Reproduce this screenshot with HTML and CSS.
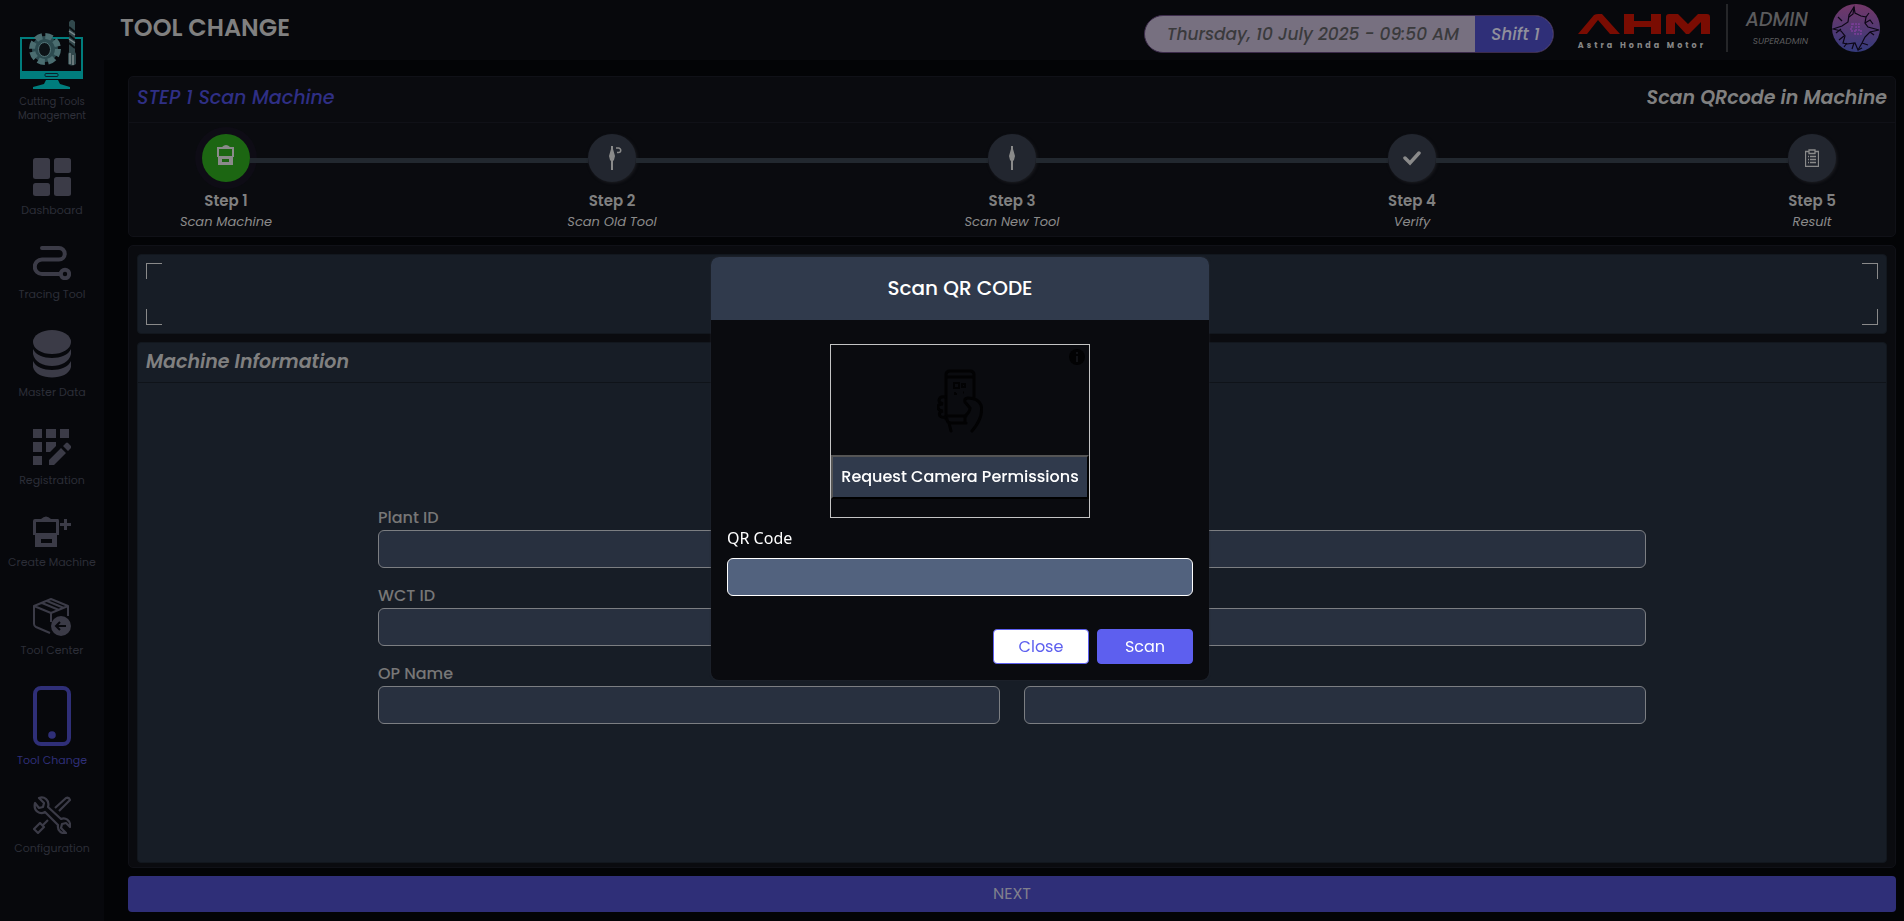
FILE: index.html
```html
<!DOCTYPE html>
<html lang="en">
<head>
<meta charset="utf-8">
<title>Tool Change</title>
<link rel="stylesheet" href="styles.css">
</head>
<body>
<div class="app">
  <aside class="sidebar">
    <div class="brand">
      <svg width="66" height="71" viewBox="0 0 66 71">
        <path d="M2 18h61v40H2z" fill="#07080c" stroke="#007d7d" stroke-width="2"/>
        <path d="M2 51h61v7H2zM27 60h12l2 4 10 3v2H14v-2l11-3z" fill="#007d7d"/>
        <rect x="26" y="53.500" width="13" height="3" rx="1" fill="none" stroke="#07202a"/>
        <circle cx="26" cy="29" r="13" fill="#2c4a4f"/>
        <circle cx="26" cy="29" r="13" fill="none" stroke="#4b6d70" stroke-width="6" stroke-dasharray="7 3.200"/>
        <ellipse cx="25.500" cy="29.500" rx="6" ry="7" fill="#0c1216" stroke="#55777a"/>
        <path d="M50 2l2-2h2l2 2v30l1 2v10q-4 3-8 0V34l1-2z" fill="#31484c"/>
        <path d="M50 7l6 5M50 15l6 5M50 23l6 5" stroke="#0a1013" stroke-width="2"/>
        <path d="M50 11l6 4M50 19l6 4M51 33v11M54 35v10" stroke="#7d8a8c" stroke-width="1.500" fill="none"/>
      </svg>
      <span>Cutting Tools<br>Management</span>
    </div>
    <nav class="nav">
      <a class="nav-item" href="#">
        <svg width="38" height="38" viewBox="0 0 38 38" fill="currentColor"><rect width="17" height="21" rx="2.500"/><rect x="21" width="17" height="15" rx="2.500"/><rect y="25" width="17" height="13" rx="2.500"/><rect x="21" y="19" width="17" height="19" rx="2.500"/></svg>
        <span>Dashboard</span>
      </a>
      <a class="nav-item" href="#">
        <svg width="38" height="34" viewBox="0 0 38 34" fill="none" stroke="currentColor" stroke-width="4" stroke-linecap="round"><path d="M9 2h17a5.700 5.700 0 0 1 0 11.500H9a7 7 0 0 0 0 14.500h17"/><circle cx="32" cy="28" r="4.200"/></svg>
        <span>Tracing Tool</span>
      </a>
      <a class="nav-item" href="#">
        <svg width="38" height="48" viewBox="0 0 38 48" fill="currentColor"><ellipse cx="19" cy="12" rx="19" ry="12"/><path d="M0 19c5 12 33 12 38 0v5c-3 16-35 16-38 0zM0 31c5 12 33 12 38 0v6c-3 14-35 14-38 0z"/></svg>
        <span>Master Data</span>
      </a>
      <a class="nav-item" href="#">
        <svg width="38" height="38" viewBox="0 0 38 38" fill="currentColor"><path d="M0 1h9v9H0zM13 1h10v9H13zM27 1h9v9h-9zM0 14h9v10H0zM13 14h10v4l-6 6h-4zM0 28h9v9H0zM16 32l12-12 5 5-12 12h-5zM30 18l3-3q1-1 2 0l3 3q.5 1 0 2l-3 3z"/></svg>
        <span>Registration</span>
      </a>
      <a class="nav-item" href="#">
        <svg width="38" height="32" viewBox="0 0 38 32"><path d="M8 3q5-5 10 0h7q1 0 1 2v14h-2v12H2V19H0V5q0-2 2-2zM3 6v11h20V6zM8 23v4h11v-4z" fill="currentColor" fill-rule="evenodd"/><path d="M32.500 3v11M27 8.500h11" stroke="currentColor" stroke-width="3"/></svg>
        <span>Create Machine</span>
      </a>
      <a class="nav-item" href="#">
        <svg width="38" height="38" viewBox="0 0 38 38" fill="none" stroke="currentColor" stroke-width="2"><path d="M17 35L3 29Q1 28 1 26V8l17-7 17 7v10M1 8l17 7 17-7M18 15v9M9 5l17 7M14 3l17 7" stroke-linejoin="round"/><circle cx="28" cy="28" r="10" fill="currentColor" stroke="none"/><path d="M33 28H23m4-4l-4 4 4 4" stroke="#07080c"/></svg>
        <span>Tool Center</span>
      </a>
      <a class="nav-item nav-item-active" href="#">
        <svg width="38" height="60" viewBox="0 0 38 60"><rect x="2" y="2" width="34" height="56" rx="6" fill="none" stroke="currentColor" stroke-width="4"/><circle cx="19" cy="49" r="3.800" fill="currentColor"/></svg>
        <span>Tool Change</span>
      </a>
      <a class="nav-item" href="#">
        <svg width="38" height="38" viewBox="0 0 38 38" fill="none" stroke="currentColor" stroke-width="2.200" stroke-linejoin="round"><path d="M6 2l5 5-1 4-4 1-4-5c-2 8 5 12 10 9l13 13c-1 6 4 9 8 8l-5-5 1-4 4-1 4 4c1-7-5-10-9-8L15 11C17 4 11 0 6 2z"/><path d="M22 12L33 2q3-1 4 2L26 15M15 24l-6 6M1 33l6-6 4 4-6 6z"/></svg>
        <span>Configuration</span>
      </a>
    </nav>
  </aside>
  <div class="page">
    <header class="topbar">
      <h1 class="page-title">TOOL CHANGE</h1>
      <div class="topbar-right">
        <div class="clock"><span class="clock-time">Thursday, 10 July 2025 - 09:50 AM</span><span class="clock-shift">Shift 1</span></div>
        <div class="logo">
          <svg width="132" height="20" viewBox="0 0 132 20" fill="#7a0c02"><path d="M0 20L16 1q2-1 4-1h4l18 20H32L20 6 9 20zM46 0h10v7h17V0h10v20H73v-7H56v7H46zM88 20V3q0-3 3-3h9l10 10L120 0h9q3 0 3 3v17h-9V8l-12 12h-3L97 8v12z"/></svg>
          <span>Astra Honda Motor</span>
        </div>
        <div class="user"><strong>ADMIN</strong><small>SUPERADMIN</small></div>
        <svg class="avatar" width="48" height="48" viewBox="0 0 48 48">
          <defs><linearGradient id="sky" x1="0" y1="0" x2="0" y2="1"><stop offset="0" stop-color="#733768"/><stop offset="1" stop-color="#343a7c"/></linearGradient></defs>
          <circle cx="24" cy="24" r="24" fill="url(#sky)"/>
          <g fill="none" stroke="#0c0716" stroke-width="1.200"><path d="M22 3l1 6 6 3 5 1-1 6 3 4 11 3-9 2-5 5-3 6-4 7-3-7-8 1-4-1 2-7-4-5-8-2 9-3 6-4 1-7z"/><path d="M22 3l-1 7-4 3M34 13l3-4M33 19l5-3 3 4M38 28l4 3M12 32l-5 4M15 39l-3 4M30 39l6 2M22 39l-2 6M9 25l-5 4M10 17l-4-4M26 46l4-2"/></g>
          <path d="M20 20h7v3h-3v3h5v4h-6v-3h-4v-4h1z" fill="none" stroke="#7d3e9a" stroke-width="1.500" stroke-dasharray="2 1"/>
        </svg>
      </div>
    </header>
    <main class="content">
      <section class="card">
        <div class="card-head"><h2 class="step-title">STEP 1 Scan Machine</h2><h2>Scan QRcode in Machine</h2></div>
        <ol class="stepper">
          <li class="step step-active"><span class="dot"><svg width="18" height="20" viewBox="0 0 18 20"><path d="M5 2q4-4 8 0h4v10h-1v8H1v-8H0V2zM2 4v7h13V4zM5 14v3h7v-3z" fill="currentColor" fill-rule="evenodd"/></svg></span><b>Step 1</b><i>Scan Machine</i></li>
          <li class="line line-first"></li>
          <li class="step"><span class="dot"><svg width="20" height="24" viewBox="0 0 20 24"><path d="M9 0h2v3l2 7-1 4-1 1v9H9v-9l-1-1-1-4 2-7z" fill="currentColor"/><path d="M14 2h2.500a2.200 2.200 0 0 1 0 4.500H15" fill="none" stroke="currentColor" stroke-width="1.500"/></svg></span><b>Step 2</b><i>Scan Old Tool</i></li>
          <li class="line"></li>
          <li class="step"><span class="dot"><svg width="8" height="24" viewBox="0 0 8 24"><path d="M3 0h2v3l2 7-1 4-1 1v9H3v-9l-1-1-1-4 2-7z" fill="currentColor"/></svg></span><b>Step 3</b><i>Scan New Tool</i></li>
          <li class="line"></li>
          <li class="step"><span class="dot"><svg width="18" height="16" viewBox="0 0 18 16"><path d="M2 8l5 5L16 3" fill="none" stroke="currentColor" stroke-width="3.500" stroke-linecap="round"/></svg></span><b>Step 4</b><i>Verify</i></li>
          <li class="line"></li>
          <li class="step"><span class="dot"><svg width="14" height="18" viewBox="0 0 14 18" fill="none" stroke="currentColor"><path d="M4 2.500H.5v15h13v-15H10M4 1h6v3.500H4zM3 7.500h1m1 0h6M3 10.500h1m1 0h6M3 13.500h1m1 0h6" stroke-width="1.300"/></svg></span><b>Step 5</b><i>Result</i></li>
        </ol>
      </section>
      <section class="card work">
        <div class="scan-strip"><span class="bracket bracket-a"></span><span class="bracket bracket-b"></span><span class="bracket bracket-c"></span><span class="bracket bracket-d"></span></div>
        <div class="panel">
          <h2 class="panel-title">Machine Information</h2>
          <form class="panel-body">
            <div class="fields">
              <div class="field"><label for="plant">Plant ID</label><input id="plant" type="text" readonly></div>
              <div class="field"><input aria-label="Plant" type="text" readonly></div>
              <div class="field"><label for="wct">WCT ID</label><input id="wct" type="text" readonly></div>
              <div class="field"><input aria-label="WCT" type="text" readonly></div>
              <div class="field"><label for="op">OP Name</label><input id="op" type="text" readonly></div>
              <div class="field"><input aria-label="OP" type="text" readonly></div>
            </div>
          </form>
        </div>
      </section>
      <button class="next" type="button">NEXT</button>
    </main>
  </div>
</div>
<div class="overlay">
  <div class="modal" role="dialog" aria-labelledby="modal-title">
    <h2 class="modal-title" id="modal-title">Scan QR CODE</h2>
    <div class="modal-body">
      <div class="camera">
        <svg class="info" width="16" height="16" viewBox="0 0 16 16"><circle cx="8" cy="8" r="8" fill="#020203"/><path d="M8 3v2M8 7v6" stroke="#111216" stroke-width="2"/></svg>
        <svg class="phone" width="46" height="64" viewBox="0 0 46 64" fill="none" stroke="#020203" stroke-width="3" stroke-linecap="round"><path d="M9 50V6q0-4 4-4h20q4 0 4 4v23M9 8h28M9 47h20M10 50q0 4 4 4h15M12 54l2 8M35 62q12-14 9-26-3-7-13-7-4 0-3 4l5 6q0 4-5 8v6"/><path d="M8 28q-5-1-6 3 0 3 4 4-6 0-5 4 1 3 5 3-5 1-3 5 2 2 5 1"/><path d="M17 14h5v5h-5zM25 15h3v3h-3zM18 23v2h2M26 23.500h1" stroke-width="2" stroke-linecap="butt"/></svg>
        <button class="permission" type="button">Request Camera Permissions</button>
      </div>
      <label class="qr-label" for="qr">QR Code</label>
      <input class="qr-input" id="qr" type="text">
      <div class="actions"><button class="btn btn-close" type="button">Close</button><button class="btn btn-scan" type="button">Scan</button></div>
    </div>
  </div>
</div>
</body>
</html>
```
FILE: styles.css
```css
* { box-sizing: border-box; }
body { margin: 0; background: #030406; color: #808080; font-family: Poppins, Inter, sans-serif; font-size: 16px; line-height: 24px; }
h1, h2 { margin: 0; font-weight: 600; }
button, input { font: inherit; margin: 0; }

.app { display: flex; min-height: 100vh; }
.sidebar { width: 104px; flex: none; background: #07080c; padding-top: 20px; }
.brand { display: flex; flex-direction: column; align-items: center; gap: 4px; color: #2f303a; font-size: 10px; line-height: 14px; text-align: center; }
.brand svg { display: block; }
.nav { display: flex; flex-direction: column; gap: 28px; padding-top: 35px; }
.nav-item { display: flex; flex-direction: column; align-items: center; gap: 6px; color: #3b3b47; text-decoration: none; font-size: 11px; line-height: 16px; white-space: nowrap; }
.nav-item span { color: #2c2e38; }
.nav-item svg { display: block; }
.nav-item-active, .nav-item-active span { color: #2f2f78; }

.page { flex: 1; min-width: 0; display: flex; flex-direction: column; }
.topbar { height: 60px; display: flex; justify-content: space-between; background: #07080c; padding: 4px 24px 8px 16px; }
.page-title { font-size: 24px; line-height: 48px; }
.topbar-right { display: flex; align-items: center; height: 48px; }
.clock { display: flex; height: 38px; margin-top: 11px; align-self: flex-start; border: 1px solid #3d2c4c; border-radius: 20px; overflow: hidden; font-size: 17px; font-style: italic; font-weight: 500; line-height: 36px; background: #777080; white-space: nowrap; }
.clock-time { color: #3a3a3c; padding: 0 16px 0 22px; }
.clock-shift { background: #2f2f78; color: #908f9c; padding: 0 13px 0 16px; }
.logo { display: flex; flex-direction: column; align-self: flex-start; gap: 7px; margin: 10px 16px 0 24px; width: 132px; }
.logo svg { display: block; }
.logo span { font-size: 8px; line-height: 9px; font-weight: 700; letter-spacing: 3px; color: #868686; white-space: nowrap; }
.user { display: flex; flex-direction: column; align-items: flex-end; height: 48px; border-left: 2px solid #252629; padding: 4px 24px 0 18px; color: #5b5b5d; font-style: italic; }
.user strong { font-size: 19px; line-height: 24px; font-weight: 500; }
.user small { font-size: 9px; line-height: 18px; }

.content { flex: 1; display: flex; flex-direction: column; gap: 8px; padding: 16px 8px 9px 24px; }
.card { border: 1px solid #101117; border-radius: 5px; background: #0a0b0f; }
.card-head { display: flex; justify-content: space-between; align-items: center; height: 46px; padding: 0 8px 4px; border-bottom: 1px solid #101117; }
.card-head h2, .panel-title { font-size: 19px; font-style: italic; }
.card-head .step-title { color: #2f2f85; font-weight: 500; }
.stepper { display: flex; list-style: none; margin: 0; padding: 11px 59px 4px 73px; }
.step { width: 48px; display: flex; flex-direction: column; align-items: center; white-space: nowrap; }
.dot { width: 48px; height: 48px; border-radius: 50%; display: flex; align-items: center; justify-content: center; background: #22262f; color: #8a8a8a; box-shadow: 1px 1px 3px #1c1d22; }
.step-active .dot { background: #1c6612; box-shadow: 0 0 0 7px #0e0c15; padding-bottom: 6px; }
.step b { font-size: 15px; font-weight: 600; line-height: 22px; margin-top: 8px; }
.step i { font-size: 13px; line-height: 20px; color: #8a8a8a; }
.line { flex: 352; height: 5px; margin-top: 24px; background: #22282f; }
.line-first { flex: 338; }

.work { flex: 1; display: flex; flex-direction: column; gap: 8px; padding: 8px 8px 4px; }
.scan-strip, .panel { background: #171d26; border: 1px solid #12171e; border-radius: 4px; }
.scan-strip { height: 80px; padding: 8px; display: grid; grid-template-columns: 16px 16px; grid-template-rows: 16px 16px; justify-content: space-between; align-content: space-between; }
.bracket { border: 0 solid #8a8a8a; }
.bracket-a { border-width: 1px 0 0 1px; }
.bracket-b { border-width: 1px 1px 0 0; }
.bracket-c { border-width: 0 0 1px 1px; }
.bracket-d { border-width: 0 1px 1px 0; }
.panel { flex: 1; display: flex; flex-direction: column; }
.panel-title { padding: 0 8px 2px; line-height: 37px; border-bottom: 1px solid #0f1319; }
.panel-body { flex: 1; display: flex; align-items: center; justify-content: center; margin: 0; padding: 0 24px; }
.fields { width: 100%; max-width: 1268px; display: grid; grid-template-columns: 1fr 1fr; gap: 0 24px; }
.field { display: flex; flex-direction: column; justify-content: flex-end; height: 78px; padding-bottom: 16px; }
.field label { font-weight: 500; color: #777; line-height: 24px; }
.field input { width: 100%; height: 38px; border: 1px solid #7c7e82; border-radius: 6px; background: #28303f; padding: 0 12px; }
.next { height: 36px; border: 0; border-radius: 4px; background: #2f2f78; color: #807f8d; }

.overlay { position: fixed; inset: 0; display: flex; align-items: center; justify-content: center; padding: 16px 0 0 16px; }
.modal { width: 498px; border-radius: 8px; overflow: hidden; background: #0a0b0f; box-shadow: 0 0 2px #2a2d34; color: #fff; }
.modal-title { background: #303a4c; font-size: 20px; font-weight: 500; line-height: 63px; text-align: center; }
.modal-body { padding: 24px 16px 16px; display: flex; flex-direction: column; }
.camera { align-self: center; width: 260px; height: 174px; border: 1px solid #c4c4c4; display: flex; flex-direction: column; align-items: center; padding-top: 4px; }
.info { align-self: flex-end; margin-right: 4px; }
.phone { margin: 4px 0 22px; }
.permission { width: 100%; height: 44px; border: 2px solid; border-color: #555 #000 #000 #555; background: #303a4c; color: #fff; font-weight: 500; padding: 0; }
.qr-label { font-family: "Noto Sans", sans-serif; margin-top: 8px; line-height: 24px; }
.qr-input { height: 38px; margin-top: 8px; border: 1px solid #fff; border-radius: 6px; background: #52627e; color: #fff; padding: 0 12px; }
.actions { display: flex; justify-content: flex-end; gap: 8px; margin-top: 33px; }
.btn { width: 96px; height: 35px; border: 1px solid #5d5fef; border-radius: 4px; }
.btn-close { background: #fff; color: #5d5fef; }
.btn-scan { background: #5d5fef; color: #fff; }
```
